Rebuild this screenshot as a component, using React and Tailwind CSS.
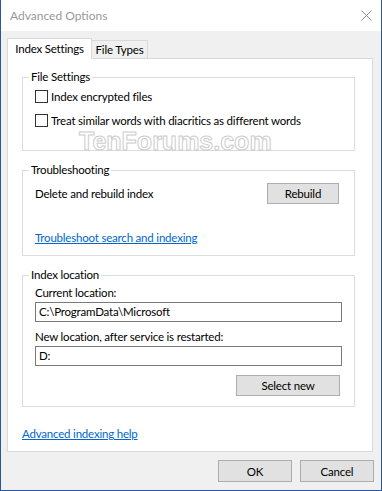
import React from "react";

const font = { fontFamily: 'Lato, "Segoe UI", sans-serif' };

const GroupBox = ({ title, className = "", children }) => (
  <fieldset className={`border border-[#dcdcdc] px-[12px] ${className}`}>
    <legend className="-ml-[6px] px-[2px] leading-[16px]">{title}</legend>
    {children}
  </fieldset>
);

const Checkbox = ({ label }) => (
  <label className="flex items-center h-[13px] gap-[3px]">
    <span className="w-[13px] h-[13px] border border-[#333] bg-white" />
    <span className="leading-[16px]">{label}</span>
  </label>
);

const Button = ({ children, className = "" }) => (
  <button
    className={`h-[21px] bg-[#e1e1e1] border border-[#adadad] leading-[19px] text-black ${className}`}
  >
    {children}
  </button>
);

const TextField = ({ value }) => (
  <div className="h-[20px] w-[307px] border border-[#7a7a7a] bg-white px-[3px] leading-[18px]">
    {value}
  </div>
);

export default function App() {
  return (
    <div
      className="w-[382px] h-[491px] flex flex-col bg-[#f0f0f0] border-x border-b border-[#2b5797] text-[11.5px] tracking-[-0.2px] text-black"
      style={font}
    >
      {/* Title bar */}
      <div className="h-[31px] bg-white flex items-center justify-between pl-[9px] pr-[9px]">
        <span className="text-[#999] text-[12px] tracking-normal">Advanced Options</span>
        <svg width="11" height="11" viewBox="0 0 11 11" className="text-[#8a8a8a]">
          <path d="M0.5 0.5 L10.5 10.5 M10.5 0.5 L0.5 10.5" stroke="currentColor" strokeWidth="1" />
        </svg>
      </div>

      {/* Body */}
      <div className="flex-1 flex flex-col px-[6px] pt-[7px]">
        {/* Tabs */}
        <div className="flex items-end h-[20px]">
          <div className="relative z-10 -mb-px h-[21px] w-[85px] bg-white border border-b-0 border-[#d9d9d9] flex items-center justify-center">
            Index Settings
          </div>
          <div className="h-[18px] w-[56px] bg-[#f0f0f0] border border-l-0 border-b-0 border-[#d9d9d9] flex items-center justify-center">
            File Types
          </div>
        </div>

        {/* Panel */}
        <div className="relative h-[394px] w-[366px] bg-white border border-[#d9d9d9] pl-[14px] pr-[17px] pt-[10px]">
          <GroupBox title="File Settings" className="pt-[5px] pb-[23px]">
            <div className="flex flex-col gap-[11px]">
              <Checkbox label="Index encrypted files" />
              <Checkbox label="Treat similar words with diacritics as different words" />
            </div>
          </GroupBox>

          <GroupBox title="Troubleshooting" className="mt-[11px] pt-[5px] pb-[9px]">
            <div className="flex items-center justify-between pr-[3px]">
              <span>Delete and rebuild index</span>
              <Button className="w-[72px]">Rebuild</Button>
            </div>
            <a className="block mt-[26px] leading-[16px] text-[#0066cc] underline">
              Troubleshoot search and indexing
            </a>
          </GroupBox>

          <GroupBox title="Index location" className="mt-[11px] pt-[2px] pb-[10px]">
            <div className="leading-[16px]">Current location:</div>
            <div className="mt-[1px]">
              <TextField value="C:\ProgramData\Microsoft" />
            </div>
            <div className="mt-[7px] leading-[16px]">New location, after service is restarted:</div>
            <div className="mt-[1px]">
              <TextField value="D:" />
            </div>
            <div className="flex justify-end mt-[9px] pr-[2px]">
              <Button className="w-[104px]">Select new</Button>
            </div>
          </GroupBox>

          <a className="block mt-[19px] leading-[16px] text-[#0066cc] underline">
            Advanced indexing help
          </a>

          {/* watermark */}
          <span
            className="absolute left-[71px] top-[70px] text-[25px] font-bold leading-none tracking-normal text-white pointer-events-none [-webkit-text-stroke:1px_#cdcdcd]"
            style={{ fontFamily: '"Liberation Sans", Arial, sans-serif' }}
          >
            TenForums.com
          </span>
        </div>

        {/* Footer buttons */}
        <div className="flex justify-end gap-[8px] mt-[8px] pr-[1px]">
          <Button className="w-[74px] h-[22px]">OK</Button>
          <Button className="w-[74px] h-[22px]">Cancel</Button>
        </div>
      </div>
    </div>
  );
}
